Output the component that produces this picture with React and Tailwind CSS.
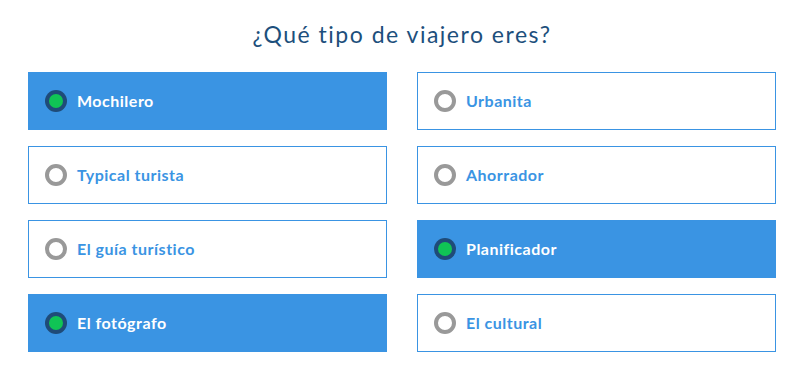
import React from "react";

const options = [
  { label: "Mochilero", selected: true },
  { label: "Urbanita", selected: false },
  { label: "Typical turista", selected: false },
  { label: "Ahorrador", selected: false },
  { label: "El guía turístico", selected: false },
  { label: "Planificador", selected: true },
  { label: "El fotógrafo", selected: true },
  { label: "El cultural", selected: false },
];

function Option({ label, selected }) {
  return (
    <div
      className={
        selected
          ? "flex h-[58px] items-center border border-[#3a94e3] bg-[#3a94e3] pl-[16px]"
          : "flex h-[58px] items-center border border-[#3a94e3] bg-white pl-[16px]"
      }
    >
      {selected ? (
        <span className="flex h-[22px] w-[22px] items-center justify-center rounded-full bg-[#1f4b78]">
          <span className="h-[14px] w-[14px] rounded-full bg-[#10c455]" />
        </span>
      ) : (
        <span className="h-[22px] w-[22px] rounded-full border-[4px] border-[#999999] bg-white" />
      )}
      <span
        className={
          selected
            ? "ml-[10px] text-[16px] font-bold tracking-[0.5px] text-white"
            : "ml-[10px] text-[16px] font-bold tracking-[0.5px] text-[#3a94e3]"
        }
      >
        {label}
      </span>
    </div>
  );
}

export default function App() {
  return (
    <div className="h-[374px] w-[804px] bg-white font-['Lato','Open_Sans',sans-serif]">
      <h1 className="pt-[19px] text-center text-[23px] leading-[30px] font-normal tracking-[1.5px] text-[#1d4f7c]">
        ¿Qué tipo de viajero eres?
      </h1>
      <div className="mx-[28px] mt-[23px] grid grid-cols-2 gap-x-[30px] gap-y-[16px]">
        {options.map((o) => (
          <Option key={o.label} {...o} />
        ))}
      </div>
    </div>
  );
}
